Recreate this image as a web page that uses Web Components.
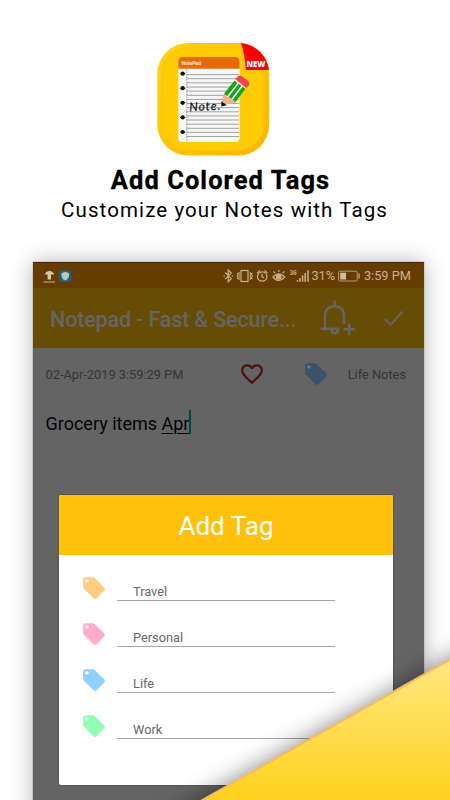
<!DOCTYPE html>
<html lang="en">
<head>
<meta charset="utf-8">
<meta name="viewport" content="width=device-width, initial-scale=1">
<title>Add Colored Tags</title>
<style>
  body {
    margin: 0;
    background: #fff;
    font-family: Roboto, "Liberation Sans", sans-serif;
  }
</style>
</head>
<body>
<promo-page>
  <app-logo slot="logo"></app-logo>
  <promo-heading slot="heading">
    <span slot="title">Add Colored Tags</span>
    <span slot="subtitle">Customize your Notes with Tags</span>
  </promo-heading>
  <phone-screen slot="screen">
    <status-bar></status-bar>
    <note-bar>Notepad - Fast &amp; Secure...</note-bar>
    <note-meta>
      <span slot="date">02-Apr-2019 3:59:29 PM</span>
      <span slot="tag">Life Notes</span>
    </note-meta>
    <note-text>Grocery items <u>Apr</u></note-text>
    <tag-dialog slot="dialog">
      <span slot="title">Add Tag</span>
      <tag-row color="#ffcc80">Travel</tag-row>
      <tag-row color="#ffabcc">Personal</tag-row>
      <tag-row color="#90d0ff">Life</tag-row>
      <tag-row color="#93ffb5">Work</tag-row>
    </tag-dialog>
  </phone-screen>
  <page-corner slot="corner"></page-corner>
</promo-page>

<script>
class PromoPage extends HTMLElement {
  constructor() {
    super();
    this.attachShadow({ mode: 'open' });
  }

  connectedCallback() {
    this.shadowRoot.innerHTML = `
      <style>
        :host {
          display: flex;
          flex-direction: column;
          align-items: center;
          position: relative;
          box-sizing: border-box;
          width: 450px;
          height: 800px;
          padding-top: 42px;
          overflow: hidden;
          background: #fff;
        }
        ::slotted(*) { flex: none; }
      </style>
      <slot name="logo"></slot>
      <slot name="heading"></slot>
      <slot name="screen"></slot>
      <slot name="corner"></slot>
    `;
  }
}

class AppLogo extends HTMLElement {
  constructor() {
    super();
    this.attachShadow({ mode: 'open' });
  }

  connectedCallback() {
    let lines = '';
    for (let y = 32.6; y < 97; y += 4.13) {
      lines += `<path d="M29.5 ${y.toFixed(1)}H82" stroke="#8c8c8c" stroke-width=".8"/>`;
    }
    const holes = [31.7, 46.2, 60.8, 75.4, 90].map(y =>
      `<circle cx="25.7" cy="${y}" r="2.1" fill="#111"/><path d="M23 ${y}h5.500" stroke="#111" stroke-width=".7"/>`
    ).join('');

    this.shadowRoot.innerHTML = `
      <style>
        :host { display: block; width: 113px; height: 114px; margin-right: 24px; }
        svg { display: block; }
      </style>
      <svg width="113" height="114" viewBox="0 0 113 114">
        <defs>
          <linearGradient id="rim" x1="0" y1="0" x2="1" y2="1">
            <stop offset="0" stop-color="#ffd21a"/>
            <stop offset=".6" stop-color="#fcc200"/>
            <stop offset="1" stop-color="#f7b500"/>
          </linearGradient>
          <clipPath id="shape"><rect x=".3" y="1" width="112" height="112.5" rx="31"/></clipPath>
        </defs>
        <g clip-path="url(#shape)">
          <rect width="113" height="114" fill="url(#rim)"/>
          <rect x="5" y="5.5" width="102.5" height="103" rx="27" fill="#ffcb05" stroke="#fbc300" stroke-width=".8"/>
          <path d="M83.500 0H113V28H88.800Q88 12 83.500 0z" fill="#fe0000"/>
        </g>
        <rect x="21.300" y="15" width="61.300" height="85" rx="4" fill="#f7f7f7"/>
        <path d="M21.300 26.700V19q0-4 4-4h53.300q4 0 4 4v7.700z" fill="#e66a08"/>
        ${lines}
        <path d="M29.800 27V100" stroke="#777" stroke-width=".7" stroke-dasharray="1.500 1"/>
        ${holes}
        <text x="24.500" y="22.900" font-family="Roboto" font-size="5.300" font-weight="700" fill="#ffe4ce" textLength="19.500">NotePad</text>
        <text x="89.500" y="25.200" font-family="Open Sans" font-size="8.200" font-weight="800" fill="#fff" textLength="19" lengthAdjust="spacingAndGlyphs">NEW</text>
        <text x="32.500" y="69.300" transform="rotate(-3 32.500 69.300)" font-family="Lato" font-size="12" font-style="italic" fill="#111" stroke="#111" stroke-width=".2" textLength="31">Note.</text>
        <path d="M66 52.300L65.200 59.700 70.200 62.600 77.500 60.700 74 54z" fill="#f5b183"/>
        <path d="M64.500 59.300L64.200 64.500 69.800 63.200z" fill="#111"/>
        <path d="M67 51.700L77.500 38.500 88.500 46.800 78 60.800z" fill="#16a51b"/>
        <path d="M70.500 55L81.200 41.300M74.400 58L85 44.300" stroke="#fff" stroke-width="1.500"/>
        <path d="M66 52.800q3.700-1 4.600 2.400 3.400-.300 4.300 2.800 2.800-.200 3.300 2.800l-4 1-8-3z" fill="#f5b183"/>
        <path d="M78.200 37.300L81.200 34.300Q82.800 32.800 84.800 34.200L91.200 39.100Q93.200 40.900 92 43.300L89.200 46.300z" fill="#ee4554"/>
        <path d="M77.800 38L88.800 46.400" stroke="#efe0d0" stroke-width="1.100"/>
      </svg>
    `;
  }
}

class PromoHeading extends HTMLElement {
  constructor() {
    super();
    this.attachShadow({ mode: 'open' });
  }

  connectedCallback() {
    this.shadowRoot.innerHTML = `
      <style>
        :host {
          display: flex;
          flex-direction: column;
          align-items: center;
          width: 450px;
          height: 106px;
          box-sizing: border-box;
          padding-top: 9px;
          color: #000;
          white-space: nowrap;
        }
        .title {
          font-size: 25.500px;
          line-height: 30px;
          font-weight: 700;
          letter-spacing: 1.050px;
          margin-right: 9px;
          -webkit-text-stroke: 0.300px #000;
        }
        .subtitle {
          font-size: 20.500px;
          line-height: 30px;
          letter-spacing: 1.100px;
          margin-right: 1px;
        }
      </style>
      <div class="title"><slot name="title"></slot></div>
      <div class="subtitle"><slot name="subtitle"></slot></div>
    `;
  }
}

class PhoneScreen extends HTMLElement {
  constructor() {
    super();
    this.attachShadow({ mode: 'open' });
  }

  connectedCallback() {
    this.shadowRoot.innerHTML = `
      <style>
        :host {
          display: flex;
          flex-direction: column;
          position: relative;
          width: 391px;
          height: 560px;
          margin-left: 7px;
          background: #646464;
          box-shadow: 0 0 1px #777, 0 0 20px rgba(0,0,0,0.31);
        }
      </style>
      <slot></slot>
      <slot name="dialog"></slot>
    `;
  }
}

class StatusBar extends HTMLElement {
  constructor() {
    super();
    this.attachShadow({ mode: 'open' });
  }

  connectedCallback() {
    this.shadowRoot.innerHTML = `
      <style>
        :host {
          display: flex;
          align-items: center;
          box-sizing: border-box;
          height: 26px;
          padding: 0 13px 0 9px;
          background: #663d00;
          border-top: 1px solid #5c1c00;
          color: #c9b190;
          font-size: 12.800px;
          line-height: 26px;
          white-space: nowrap;
        }
        svg { display: block; flex: none; }
        .icons { margin-left: auto; }
        .percent { width: 27px; }
        .time { margin-left: 3.500px; }
      </style>
      <svg width="32" height="24" viewBox="0 0 32 24" fill="none">
        <path d="M1.500 18H13" stroke="#c9b190" stroke-width="1"/>
        <path d="M2.500 10.500Q4 7.300 7.400 6.800Q11 7.300 12.200 10.500H9V15.500H5.600V10.500z" fill="#d6c7ad"/>
        <rect x="17.500" y="6.200" width="11.500" height="11.500" rx="2" fill="#17648c"/>
        <path d="M23.200 7.800L27 9.200V12Q26.800 14.800 23.200 16.500Q19.800 14.800 19.500 12V9.200z" fill="#c3c4b4"/>
      </svg>
      <svg class="icons" width="88" height="24" viewBox="0 0 88 24" fill="none" stroke="#c9b190" stroke-width="1.200">
        <path d="M2.200 8.500L8.200 14.700 5.200 17.800V6L8.200 9 2.200 15.200M.5 12h1.500M8.500 12h1.500"/>
        <rect x="18" y="6.500" width="7" height="11"/>
        <path d="M16 8v8M27.300 8v8M14 9.500h1.500l-1.500 2.500 1.500 2.500H14M29.500 9.500H28l1.500 2.500L28 14.500h1.500" stroke-width="1"/>
        <circle cx="39.200" cy="12.500" r="4.700"/>
        <path d="M39 9.800v3l2 1M34 9l3-2.600M44.400 9l-3-2.600"/>
        <path d="M50 13Q55.800 6.800 61.700 13Q55.800 20 50 13zM52 9L50.500 7.500M55.800 8V6M59.700 9L61.200 7.500"/>
        <circle cx="55.800" cy="12.800" r="2.300" fill="#c9b190"/>
        <text x="67" y="11" stroke="none" fill="#c9b190" font-family="Roboto" font-weight="700" font-size="6.500" textLength="6.500" lengthAdjust="spacingAndGlyphs">3G</text>
        <path d="M74.500 17.800V16M77 17.800V14M79.600 17.800V11.500M82.200 17.800V9M85 17.800V6.300" stroke-width="1.500"/>
      </svg>
      <span class="percent">31%</span>
      <svg width="22" height="24" viewBox="0 0 22 24">
        <rect x=".6" y="7.200" width="18.600" height="9.800" rx="1" fill="none" stroke="#b59a78"/>
        <path d="M2.200 8.700H8V15.500H2.200z" fill="#d2bfa0"/>
        <path d="M21 9.500v5" stroke="#b59a78" stroke-width="1.500"/>
      </svg>
      <span class="time">3:59 PM</span>
    `;
  }
}

class NoteBar extends HTMLElement {
  constructor() {
    super();
    this.attachShadow({ mode: 'open' });
  }

  connectedCallback() {
    this.shadowRoot.innerHTML = `
      <style>
        :host {
          display: flex;
          align-items: center;
          box-sizing: border-box;
          height: 60px;
          padding-left: 17px;
          background: #664d03;
          color: #656565;
        }
        .title {
          width: 268px;
          font-size: 21.600px;
          letter-spacing: -0.190px;
          font-weight: 500;
          line-height: 60px;
          white-space: nowrap;
          padding-top: 3px;
        }
        svg { display: block; flex: none; }
      </style>
      <div class="title"><slot></slot></div>
      <svg width="106" height="60" viewBox="0 0 106 60" fill="none" stroke="#656565">
        <path d="M2.500 40.800H21.500M7 41V28.500Q7.200 18.200 16.700 18.200Q26 18.400 26 28.500V36" stroke-width="2.500"/>
        <path d="M16.700 12.500V18" stroke-width="2.500"/>
        <path d="M13.500 42Q14 45.300 16.700 45.300T20 42" stroke-width="2.600"/>
        <path d="M25.500 41.300H37M31.200 35.500V47" stroke-width="2.500"/>
        <path d="M66.800 31L72.500 36.700 84.800 23.500" stroke-width="2"/>
      </svg>
    `;
  }
}

class NoteMeta extends HTMLElement {
  constructor() {
    super();
    this.attachShadow({ mode: 'open' });
  }

  connectedCallback() {
    this.shadowRoot.innerHTML = `
      <style>
        :host {
          display: flex;
          align-items: center;
          box-sizing: border-box;
          height: 52px;
          padding: 0 18px 0 12.500px;
          color: #343434;
          font-size: 12.800px;
          white-space: nowrap;
        }
        .heart { display: block; margin-left: auto; margin-right: 37.500px; }
        .tag { margin-left: 19px; }
      </style>
      <slot name="date"></slot>
      <svg class="heart" width="26" height="26" viewBox="0 0 24 24" fill="#4c1010">
        <path d="M16.500 3c-1.740 0-3.410.810-4.500 2.090C10.910 3.810 9.240 3 7.500 3 4.420 3 2 5.420 2 8.500c0 3.780 3.400 6.860 8.550 11.540L12 21.350l1.450-1.320C18.600 15.360 22 12.280 22 8.500 22 5.420 19.580 3 16.500 3zm-4.400 15.550l-.1.100-.1-.1C7.140 14.240 4 11.390 4 8.500 4 6.500 5.500 5 7.500 5c1.540 0 3.040.990 3.570 2.360h1.870C13.460 5.990 14.960 5 16.500 5c2 0 3.500 1.500 3.500 3.500 0 2.890-3.140 5.740-7.900 10.050z"/>
      </svg>
      <tag-icon color="#3a536a" hole="#777c80"></tag-icon>
      <span class="tag"><slot name="tag"></slot></span>
    `;
  }
}

class NoteText extends HTMLElement {
  constructor() {
    super();
    this.attachShadow({ mode: 'open' });
  }

  connectedCallback() {
    this.shadowRoot.innerHTML = `
      <style>
        :host {
          display: flex;
          align-items: center;
          height: 46px;
          padding-left: 12.500px;
          color: #050505;
          font-size: 18px;
          white-space: pre;
        }
        ::slotted(u) {
          text-decoration-thickness: 1px;
          text-underline-offset: 3px;
        }
        .caret { width: 2px; height: 24px; margin-bottom: 2px; background: #004b43; }
      </style>
      <span><slot></slot></span><span class="caret"></span>
    `;
  }
}

class TagIcon extends HTMLElement {
  constructor() {
    super();
    this.attachShadow({ mode: 'open' });
  }

  connectedCallback() {
    this.shadowRoot.innerHTML = `
      <style>
        :host { display: block; flex: none; }
        svg { display: block; }
      </style>
      <svg width="26" height="26" viewBox="0 0 24 24">
        <circle cx="5.500" cy="5.500" r="2" fill="${this.getAttribute('hole') || '#fff'}"/>
        <path fill="${this.getAttribute('color')}" d="M21.410 11.580l-9-9C12.050 2.220 11.550 2 11 2H4c-1.100 0-2 .9-2 2v7c0 .550.220 1.050.590 1.420l9 9c.360.360.860.580 1.410.580.550 0 1.050-.220 1.410-.590l7-7c.370-.360.590-.860.590-1.410 0-.550-.230-1.060-.590-1.420zM5.500 7C4.670 7 4 6.330 4 5.500S4.670 4 5.500 4 7 4.670 7 5.500 6.330 7 5.500 7z"/>
      </svg>
    `;
  }
}

class TagDialog extends HTMLElement {
  constructor() {
    super();
    this.attachShadow({ mode: 'open' });
  }

  connectedCallback() {
    this.shadowRoot.innerHTML = `
      <style>
        :host {
          position: absolute;
          left: 26px;
          top: 233px;
          width: 334px;
          height: 290px;
          overflow: hidden;
          background: #fff;
          border-radius: 2px;
          box-shadow: 0 0 2px rgba(0,0,0,0.45);
        }
        header {
          height: 60px;
          background: #ffc10a;
          color: #fff;
          font-size: 26px;
          line-height: 63px;
          text-align: center;
        }
        .rows { padding: 0 58px 0 22px; }
      </style>
      <header><slot name="title"></slot></header>
      <div class="rows"><slot></slot></div>
    `;
  }
}

class TagRow extends HTMLElement {
  constructor() {
    super();
    this.attachShadow({ mode: 'open' });
  }

  connectedCallback() {
    this.shadowRoot.innerHTML = `
      <style>
        :host {
          display: flex;
          align-items: flex-end;
          justify-content: space-between;
          height: 46px;
        }
        .field {
          box-sizing: border-box;
          width: 218px;
          padding-left: 16px;
          border-bottom: 1px solid #a5a5a5;
          color: #686868;
          font-size: 12.800px;
          line-height: 16px;
        }
      </style>
      <tag-icon color="${this.getAttribute('color')}"></tag-icon>
      <div class="field"><slot></slot></div>
    `;
  }
}

class PageCorner extends HTMLElement {
  constructor() {
    super();
    this.attachShadow({ mode: 'open' });
  }

  connectedCallback() {
    this.shadowRoot.innerHTML = `
      <style>
        :host { position: absolute; left: 0; bottom: 0; }
        svg { display: block; }
      </style>
      <svg width="450" height="240" viewBox="0 0 450 240">
        <defs>
          <linearGradient id="fill" gradientUnits="userSpaceOnUse" x1="0" y1="108" x2="0" y2="240">
            <stop offset="0" stop-color="#ffe67c"/>
            <stop offset="1" stop-color="#fed21c"/>
          </linearGradient>
          <filter id="soft" filterUnits="userSpaceOnUse" x="100" y="0" width="420" height="300">
            <feGaussianBlur stdDeviation="12"/>
          </filter>
        </defs>
        <path d="M166 260L500 71.500V300H166z" fill="#000" opacity=".5" filter="url(#soft)"/>
        <path d="M202 240L450 100V240z" fill="url(#fill)"/>
        <path d="M200 241.500L452 98.700" stroke="#fabb60" stroke-width="2.200"/>
      </svg>
    `;
  }
}

customElements.define('promo-page', PromoPage);
customElements.define('app-logo', AppLogo);
customElements.define('promo-heading', PromoHeading);
customElements.define('phone-screen', PhoneScreen);
customElements.define('status-bar', StatusBar);
customElements.define('note-bar', NoteBar);
customElements.define('note-meta', NoteMeta);
customElements.define('note-text', NoteText);
customElements.define('tag-icon', TagIcon);
customElements.define('tag-dialog', TagDialog);
customElements.define('tag-row', TagRow);
customElements.define('page-corner', PageCorner);
</script>
</body>
</html>
